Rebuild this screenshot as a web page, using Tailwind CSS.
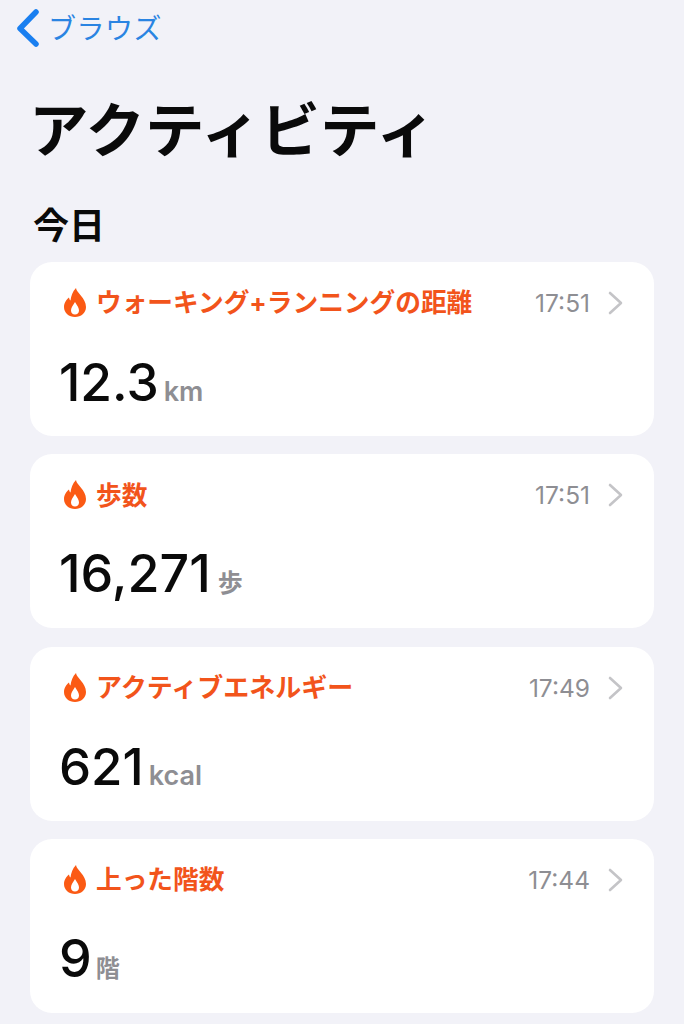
<!DOCTYPE html>
<html lang="ja">
<head>
    <meta charset="UTF-8">
    <meta name="viewport" content="width=device-width, initial-scale=1.0">
    <title>アクティビティ</title>
    <script src="https://cdn.jsdelivr.net/npm/@tailwindcss/browser@4"></script>
</head>
<body class="bg-[#f2f2f8] font-['Inter','Noto_Sans_CJK_JP',sans-serif] h-[1024px] overflow-hidden">
    <header class="h-[56px] pl-[16px] flex items-center">
        <svg class="w-[24px] h-[40px] shrink-0 -mt-[1px]" viewBox="0 0 24 40" fill="none" stroke="#1a7ff0" stroke-width="5.5" stroke-linecap="round" stroke-linejoin="round"><path d="M20 4 L4 20.5 L20 36"/></svg>
        <span class="ml-[8px] mt-[2px] text-[28px] leading-none tracking-[0.5px] text-[#2a84e2] font-normal">ブラウズ</span>
    </header>
    <h1 class="pl-[29px] mt-[39px] text-[59.5px] leading-[70px] font-bold text-[#0a0a0a]">アクティビティ</h1>
    <h2 class="pl-[33px] mt-[39px] text-[36px] leading-[44px] font-bold text-[#0a0a0a]">今日</h2>

    <main class="mt-[14px] mx-[30px] flex flex-col gap-[18.4px]">
        <section class="bg-white rounded-[22px] h-[174px] pl-[29px] pr-[31px] pt-[24px]">
            <div class="flex items-center h-[34px]">
                <svg class="ml-[5px] w-[22px] h-[29px] shrink-0 -mt-[1px]" viewBox="0 0 22 29"><path fill="#fb5a14" fill-rule="evenodd" d="M12 0C12.500 5 22 10 22 19C22 25 17 29 11 29C5 29 0 25 0 19C0 15 2.500 11.500 5 9.500C5.300 11 5.800 12 6.500 12.500C7 8 8.500 3.500 12 0ZM11 14C8.500 18 7 20 7 22.500C7 25 8.800 26.500 11 26.500C13.200 26.500 15 25 15 22.500C15 20 13.500 18 11 14Z"/></svg>
                <span class="ml-[10px] text-[25.7px] leading-none font-bold text-[#f2541b] whitespace-nowrap">ウォーキング+ランニングの距離</span>
                <span class="ml-auto text-[24.5px] leading-none text-[#8e8e93]">17:51</span>
                <svg class="ml-[18px] w-[15px] h-[24px] shrink-0" viewBox="0 0 15 24" fill="none" stroke="#c4c4c7" stroke-width="2.600" stroke-linecap="round" stroke-linejoin="round"><path d="M2 2 L13 12 L2 22"/></svg>
            </div>
            <div class="flex items-baseline mt-[32px]">
                <span class="text-[51.500px] leading-[60px] font-medium text-[#0a0a0a]">12.3</span>
                <span class="ml-[5px] text-[27px] leading-none font-semibold text-[#8e8e93]">km</span>
            </div>
        </section>

        <section class="bg-white rounded-[22px] h-[174px] pl-[29px] pr-[31px] pt-[24px]">
            <div class="flex items-center h-[34px]">
                <svg class="ml-[5px] w-[22px] h-[29px] shrink-0 -mt-[1px]" viewBox="0 0 22 29"><path fill="#fb5a14" fill-rule="evenodd" d="M12 0C12.500 5 22 10 22 19C22 25 17 29 11 29C5 29 0 25 0 19C0 15 2.500 11.500 5 9.500C5.300 11 5.800 12 6.500 12.500C7 8 8.500 3.500 12 0ZM11 14C8.500 18 7 20 7 22.500C7 25 8.800 26.500 11 26.500C13.200 26.500 15 25 15 22.500C15 20 13.500 18 11 14Z"/></svg>
                <span class="ml-[10px] text-[25.7px] leading-none font-bold text-[#f2541b] whitespace-nowrap">歩数</span>
                <span class="ml-auto text-[24.5px] leading-none text-[#8e8e93]">17:51</span>
                <svg class="ml-[18px] w-[15px] h-[24px] shrink-0" viewBox="0 0 15 24" fill="none" stroke="#c4c4c7" stroke-width="2.600" stroke-linecap="round" stroke-linejoin="round"><path d="M2 2 L13 12 L2 22"/></svg>
            </div>
            <div class="flex items-baseline mt-[32px]">
                <span class="text-[52px] leading-[60px] font-medium text-[#0a0a0a]">16,271</span>
                <span class="ml-[7px] text-[25px] leading-none font-semibold text-[#8e8e93]">歩</span>
            </div>
        </section>

        <section class="bg-white rounded-[22px] h-[174px] pl-[29px] pr-[31px] pt-[24px]">
            <div class="flex items-center h-[34px]">
                <svg class="ml-[5px] w-[22px] h-[29px] shrink-0 -mt-[1px]" viewBox="0 0 22 29"><path fill="#fb5a14" fill-rule="evenodd" d="M12 0C12.500 5 22 10 22 19C22 25 17 29 11 29C5 29 0 25 0 19C0 15 2.500 11.500 5 9.500C5.300 11 5.800 12 6.500 12.500C7 8 8.500 3.500 12 0ZM11 14C8.500 18 7 20 7 22.500C7 25 8.800 26.500 11 26.500C13.200 26.500 15 25 15 22.500C15 20 13.500 18 11 14Z"/></svg>
                <span class="ml-[10px] text-[26px] leading-none font-bold text-[#f2541b] whitespace-nowrap">アクティブエネルギー</span>
                <span class="ml-auto text-[24.5px] leading-none text-[#8e8e93]">17:49</span>
                <svg class="ml-[18px] w-[15px] h-[24px] shrink-0" viewBox="0 0 15 24" fill="none" stroke="#c4c4c7" stroke-width="2.600" stroke-linecap="round" stroke-linejoin="round"><path d="M2 2 L13 12 L2 22"/></svg>
            </div>
            <div class="flex items-baseline mt-[32px]">
                <span class="text-[51px] leading-[60px] font-medium text-[#0a0a0a]">621</span>
                <span class="ml-[5px] text-[27px] leading-none font-semibold text-[#8e8e93]">kcal</span>
            </div>
        </section>

        <section class="bg-white rounded-[22px] h-[174px] pl-[29px] pr-[31px] pt-[24px]">
            <div class="flex items-center h-[34px]">
                <svg class="ml-[5px] w-[22px] h-[29px] shrink-0 -mt-[1px]" viewBox="0 0 22 29"><path fill="#fb5a14" fill-rule="evenodd" d="M12 0C12.500 5 22 10 22 19C22 25 17 29 11 29C5 29 0 25 0 19C0 15 2.500 11.500 5 9.500C5.300 11 5.800 12 6.500 12.500C7 8 8.500 3.500 12 0ZM11 14C8.500 18 7 20 7 22.500C7 25 8.800 26.500 11 26.500C13.200 26.500 15 25 15 22.500C15 20 13.500 18 11 14Z"/></svg>
                <span class="ml-[10px] text-[25.7px] leading-none font-bold text-[#f2541b] whitespace-nowrap">上った階数</span>
                <span class="ml-auto text-[24.5px] leading-none text-[#8e8e93]">17:44</span>
                <svg class="ml-[18px] w-[15px] h-[24px] shrink-0" viewBox="0 0 15 24" fill="none" stroke="#c4c4c7" stroke-width="2.600" stroke-linecap="round" stroke-linejoin="round"><path d="M2 2 L13 12 L2 22"/></svg>
            </div>
            <div class="flex items-baseline mt-[32px]">
                <span class="text-[52px] leading-[60px] font-medium text-[#0a0a0a]">9</span>
                <span class="ml-[4px] text-[24px] leading-none font-semibold text-[#8e8e93]">階</span>
            </div>
        </section>
    </main>
</body>
</html>
